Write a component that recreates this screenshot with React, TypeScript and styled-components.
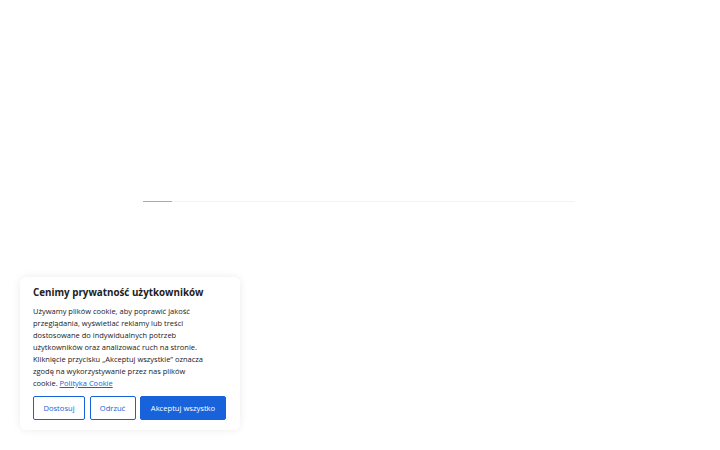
import styled, { createGlobalStyle } from "styled-components";

const GlobalStyle = createGlobalStyle`
  html, body {
    margin: 0;
    padding: 0;
    background: #ffffff;
  }
  body {
    font-family: "Open Sans", "DejaVu Sans", sans-serif;
    color: #212121;
  }
`;

export default function App() {
  return (
    <StyledPage>
      <GlobalStyle />
      <StyledLoader>
        <StyledLoaderFill style={{ width: `${(29 / 432) * 100}%` }} />
      </StyledLoader>
      <StyledBanner>
        <StyledTitle>Cenimy prywatność użytkowników</StyledTitle>
        <StyledText>
          Używamy plików cookie, aby poprawić jakość
          <br />
          przeglądania, wyświetlać reklamy lub treści
          <br />
          dostosowane do indywidualnych potrzeb
          <br />
          użytkowników oraz analizować ruch na stronie.
          <br />
          Kliknięcie przycisku „Akceptuj wszystkie” oznacza
          <br />
          zgodę na wykorzystywanie przez nas plików
          <br />
          cookie. <StyledLink href="#">Polityka Cookie</StyledLink>
        </StyledText>
        <StyledButtons>
          <StyledButton $width={52}>Dostosuj</StyledButton>
          <StyledButton $width={46}>Odrzuć</StyledButton>
          <StyledButton $width={86} $primary>
            Akceptuj wszystko
          </StyledButton>
        </StyledButtons>
      </StyledBanner>
    </StyledPage>
  );
}

const StyledPage = styled.div`
  position: relative;
  width: 720px;
  height: 450px;
  overflow: hidden;
  background: #ffffff;
`;

const StyledLoader = styled.div`
  position: absolute;
  left: 143px;
  top: 201px;
  width: 432px;
  height: 1px;
  background: #f3f3f5;
`;

const StyledLoaderFill = styled.div`
  height: 100%;
  background: #a4a8d0;
`;

const StyledBanner = styled.div`
  position: absolute;
  left: 20px;
  bottom: 20px;
  width: 220px;
  box-sizing: border-box;
  padding: 9px 13px 10px;
  background: #ffffff;
  border-radius: 6px;
  box-shadow: 0 0 8px rgba(0, 0, 0, 0.08);
`;

const StyledTitle = styled.div`
  font-size: 9.8px;
  line-height: 14px;
  font-weight: 700;
  color: #212121;
  white-space: nowrap;
`;

const StyledText = styled.p`
  margin: 5px 0 0;
  font-size: 7.5px;
  line-height: 12px;
  color: #212121;
  white-space: nowrap;
`;

const StyledLink = styled.a`
  color: #1863dc;
  text-decoration: underline;
`;

const StyledButtons = styled.div`
  display: flex;
  gap: 4.5px;
  margin-top: 7px;
`;

const StyledButton = styled.button<{ $width: number; $primary?: boolean }>`
  width: ${(p) => p.$width}px;
  height: 24px;
  padding: 0;
  box-sizing: border-box;
  font-family: "Open Sans", "DejaVu Sans", sans-serif;
  font-size: 7.6px;
  font-weight: 500;
  border: 1.5px solid #1863dc;
  border-radius: 2px;
  color: ${(p) => (p.$primary ? "#ffffff" : "#1863dc")};
  background: ${(p) => (p.$primary ? "#1863dc" : "#ffffff")};
  cursor: pointer;
`;
